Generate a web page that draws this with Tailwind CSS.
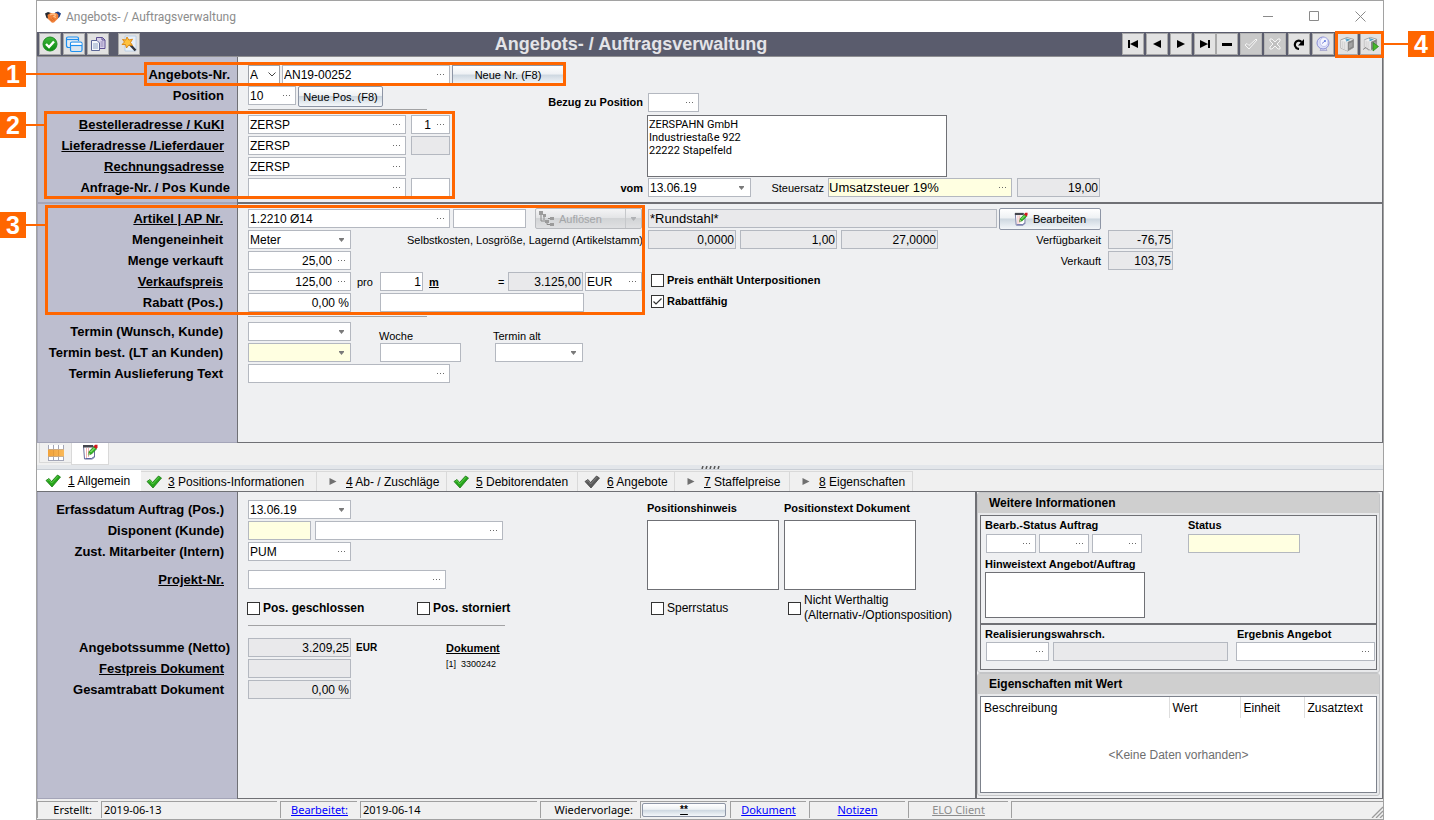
<!DOCTYPE html>
<html lang="de">
<head>
<meta charset="utf-8">
<title>Angebots- / Auftragsverwaltung</title>
<script src="https://cdn.jsdelivr.net/npm/@tailwindcss/browser@4"></script>
</head>
<body class="relative min-h-screen bg-white font-['Liberation_Sans',Arial,sans-serif] text-[12px] leading-4 text-black">

<svg class="absolute h-0 w-0" aria-hidden="true">
  <defs>
    <linearGradient id="gGreen" x1="0" y1="0" x2="0" y2="1"><stop offset="0" stop-color="#3fb83a"/><stop offset="1" stop-color="#0a8a12"/></linearGradient>
    <linearGradient id="gOrange" x1="0" y1="0" x2="1" y2="0"><stop offset="0" stop-color="#f2a33a"/><stop offset="1" stop-color="#f9b858"/></linearGradient>
  </defs>
  <symbol id="dots" viewBox="0 0 7 3"><path d="M0 1h1v1H0zM3 1h1v1H3zM6 1h1v1H6z" fill="#6a6a6a"/></symbol>
  <symbol id="caret" viewBox="0 0 7 4"><path d="M1 0h5v1L3.500 4 1 1z" fill="#7a7a7a"/></symbol>
  <symbol id="caretlight" viewBox="0 0 7 4"><path d="M1 0h5v1L3.500 4 1 1z" fill="#b0b2b5"/></symbol>
  <symbol id="tick" viewBox="0 0 16 14"><path d="M1 6.500 4 4.500 6.500 7.500 12.500 1l3 2L7 13z" fill="#27a51c" stroke="#1b7a14" stroke-width="0.800"/><path d="M2.500 6.500 4 5.500 6.600 9 13 2.200" fill="none" stroke="#5fd04c" stroke-width="1"/></symbol>
  <symbol id="tickgray" viewBox="0 0 16 14"><path d="M1 6.500 4 4.500 6.500 7.500 12.500 1l3 2L7 13z" fill="#5a5a5a" stroke="#444" stroke-width="0.800"/><path d="M2.500 6.500 4 5.500 6.600 9 13 2.200" fill="none" stroke="#808080" stroke-width="1"/></symbol>
  <symbol id="play" viewBox="0 0 8 8"><path d="M0 0l8 4-8 4z" fill="#6f6f6f"/></symbol>
  <symbol id="edit" viewBox="0 0 16 16"><path d="M1.500 2h10l1 1v10l-2 2h-8z" fill="#fff" stroke="#6a6f9c"/><path d="M1 1h10v2.500H1z" fill="#44454d"/><path d="M4.500 4v10M6.500 4v9" stroke="#f0a8a8" stroke-width="0.900"/><path d="M3.500 14.500h6l3-2" fill="none" stroke="#5a62a0"/><path d="M6.300 11l.9-3.500L12 2.500 14.500 5 9.500 10z" fill="#35b828" stroke="#1b7a14" stroke-width="0.700"/><path d="M8.500 8l4-4" stroke="#a8f096"/><path d="M11.500 2.500L13 .8h2.500v2.700L14.300 5z" fill="#d3181c"/><path d="M6.300 11l.6-2 1.400 1.300z" fill="#f4e2b8"/></symbol>
  <symbol id="cube" viewBox="0 0 16 16"><path d="M1.500 4L8 1.500l6.500 1.800v8.200L8.500 15l-7-3.200z" fill="#f3f3f3" stroke="#8f8f8f" stroke-width="0.800"/><path d="M8.500 6l6-2.500v8L8.500 15z" fill="#858585"/><path d="M10 7.500l3.500-1.500v4.500L10 12.500z" fill="#a2a2a2"/><path d="M1.500 4v7.800l7 3.200V6z" fill="#e4e4e4"/><path d="M3.500 5.500v6.500M5.500 6v7" stroke="#d0d0d0" stroke-width="0.700"/><path d="M6.500 2.800l3.500 1-3 1.200" fill="none" stroke="#4f9fc4" stroke-width="1.200"/></symbol>
</svg>

<div class="mr-[50px] ml-9 flex min-h-screen flex-col border border-[#a2a2a2] bg-[#f0f0f0]">

  <!-- Title bar -->
  <header class="flex h-[31px] items-center bg-white pl-2">
    <svg class="h-4 w-4" viewBox="0 0 16 16"><path d="M0 4.500L3 3l3 1-2 6-2.500-1z" fill="#25282f"/><path d="M16 4.500L13 2.500l-3 1 2 6.500 2.500-2z" fill="#1b3f86"/><path d="M2.500 6l3-2 3 .5 3-.5 2 2-.5 3.500L9 13.500l-2 .3L3 10z" fill="#f08038"/><path d="M5 6l3-1 2.500 1L9 7.500l2 1" fill="none" stroke="#ffbf88" stroke-width="1.300"/><path d="M5 9.500l2.500 2.500M7.200 9l2.500 2.200" stroke="#c25a1e" stroke-width="0.700"/></svg>
    <span class="ml-[5px] flex-1 font-[Roboto,sans-serif] text-[12px] text-[#8c8c8c]">Angebots- / Auftragsverwaltung</span>
    <button type="button" aria-label="Minimieren" class="flex h-7 w-[46px] items-center justify-center"><svg class="h-[11px] w-[11px]" viewBox="0 0 11 11"><path d="M0 5.500h10" stroke="#8a8a8a"/></svg></button>
    <button type="button" aria-label="Maximieren" class="flex h-7 w-[46px] items-center justify-center"><svg class="h-[11px] w-[11px]" viewBox="0 0 11 11"><path d="M.5.5h9v9H.5z" fill="none" stroke="#8a8a8a"/></svg></button>
    <button type="button" aria-label="Schließen" class="flex h-7 w-[46px] items-center justify-center"><svg class="h-[11px] w-[11px]" viewBox="0 0 11 11"><path d="M.5.5l10 10M10.500.5l-10 10" stroke="#8a8a8a"/></svg></button>
  </header>

  <!-- Toolbar -->
  <div class="flex h-6 items-center bg-[#5a5c6d] pr-px pl-[2px]">
    <div class="flex gap-[2px]">
      <button type="button" aria-label="Übernehmen" class="flex h-[22px] w-[22px] items-center justify-center border border-[#a9a9a9] bg-[#e2e2e2]"><svg class="h-4 w-4" viewBox="0 0 16 16"><circle cx="8" cy="8" r="7" fill="url(#gGreen)" stroke="#1f8a24"/><path d="M4 8l3 3 5-5.500" fill="none" stroke="#fff" stroke-width="2.400"/></svg></button>
      <button type="button" aria-label="Fenster" class="flex h-[22px] w-[22px] items-center justify-center border border-[#a9a9a9] bg-[#e2e2e2]"><svg class="h-[18px] w-[18px]" viewBox="0 0 18 18"><path d="M5 12.500H3.500q-2 0-2-2v-7q0-1.500 1.500-1.500h9q1.500 0 1.500 1.500V6" fill="#e6ecf2" stroke="#1e90f0" stroke-width="1.200"/><path d="M1.500 4.500h12" stroke="#1e90f0" stroke-width="1.200"/><rect x="5.500" y="7" width="11.500" height="9.500" rx="1.500" fill="#dbe6f0" stroke="#1e90f0" stroke-width="1.200"/><path d="M6 8h10.500v2H6z" fill="#fff"/><path d="M5.500 10.500H17" stroke="#1e90f0" stroke-width="1.200"/></svg></button>
      <button type="button" aria-label="Kopieren" class="flex h-[22px] w-[22px] items-center justify-center border border-[#a9a9a9] bg-[#e2e2e2]"><svg class="h-4 w-4" viewBox="0 0 16 16"><path d="M6.500 1.500h6l2.500 2.500v8.500H6.500z" fill="#d9d2ea" stroke="#5d4f93"/><path d="M12 1.500V4h3" fill="none" stroke="#5d4f93"/><path d="M10.500 6h3M10.500 8h3M10.500 10h3" stroke="#8f83b4"/><path d="M1.500 4.500h5.500l2.500 2.500v7.500h-8z" fill="#f4f7fb" stroke="#5c6797"/><path d="M3 8h5M3 10h5M3 12h5" stroke="#8fa3c4"/></svg></button>
      <button type="button" aria-label="Assistent" class="ml-[7px] flex h-[22px] w-[22px] items-center justify-center border border-[#a9a9a9] bg-[#e2e2e2]"><svg class="h-[18px] w-[18px]" viewBox="0 0 18 18"><path d="M5 1h11v15H5z" fill="#e9f0f8" stroke="#b4cbe6" stroke-width="0.800"/><path d="M10 9.500l5.500 6" stroke="#34363e" stroke-width="2.400"/><path d="M7 2l1.800 3 3.700-.8-2 3.300 2 3-3.700-.5L6.500 13l-1-3.500L2 9.500 4.500 7 2.500 4.500l3.200.6z" fill="#ffc23e" stroke="#d9820d" stroke-width="0.900"/></svg></button>
    </div>
    <h1 class="flex-1 text-center text-[18px] font-bold text-[#e4e4e8]">Angebots- / Auftragsverwaltung</h1>
    <div class="flex gap-[2px]">
      <button type="button" aria-label="Erster" class="flex h-[22px] w-[22px] items-center justify-center border border-[#a9a9a9] bg-[#e2e2e2]"><svg class="h-2 w-[10px]" viewBox="0 0 10 8"><path d="M0 0h2v8H0zM10 0v8L2 4z"/></svg></button>
      <button type="button" aria-label="Zurück" class="flex h-[22px] w-[22px] items-center justify-center border border-[#a9a9a9] bg-[#e2e2e2]"><svg class="h-2 w-2" viewBox="0 0 8 8"><path d="M8 0v8L0 4z"/></svg></button>
      <button type="button" aria-label="Weiter" class="flex h-[22px] w-[22px] items-center justify-center border border-[#a9a9a9] bg-[#e2e2e2]"><svg class="h-2 w-2" viewBox="0 0 8 8"><path d="M0 0v8l8-4z"/></svg></button>
      <button type="button" aria-label="Letzter" class="flex h-[22px] w-[22px] items-center justify-center border border-[#a9a9a9] bg-[#e2e2e2]"><svg class="h-2 w-[10px]" viewBox="0 0 10 8"><path d="M8 0h2v8H8zM0 0v8l8-4z"/></svg></button>
    </div>
    <div class="mr-[2px] flex gap-[2px]">
      <button type="button" aria-label="Löschen" class="flex h-[22px] w-[22px] items-center justify-center border border-[#a9a9a9] bg-[#e2e2e2]"><svg class="h-[3px] w-[10px]" viewBox="0 0 10 3"><path d="M0 0h10v3H0z"/></svg></button>
      <button type="button" disabled aria-label="Speichern" class="flex h-[22px] w-[22px] items-center justify-center border border-[#b4b4b4] bg-[#c9c9c9]"><svg class="h-[14px] w-[14px]" viewBox="0 0 14 14"><path d="M1 8l2-1.500 2 2L12 2l1 1-8 9z" fill="#c4c4c4" stroke="#f6f6f6"/></svg></button>
      <button type="button" disabled aria-label="Abbrechen" class="flex h-[22px] w-[22px] items-center justify-center border border-[#b4b4b4] bg-[#c9c9c9]"><svg class="h-[14px] w-[14px]" viewBox="0 0 14 14"><path d="M2 2h2l3 3 3-3h2v2L9 7l3 3v2h-2L7 9l-3 3H2v-2l3-3-3-3z" fill="#c0c0c0" stroke="#f6f6f6"/></svg></button>
      <button type="button" aria-label="Aktualisieren" class="flex h-[22px] w-[22px] items-center justify-center border border-[#a9a9a9] bg-[#e2e2e2]"><svg class="h-3 w-3" viewBox="0 0 12 12"><path d="M6 11C1.500 10.500 1 6 3 3.800 4.500 2.200 7 2.200 8.500 4" fill="none" stroke="#000" stroke-width="2.200"/><path d="M11 1v6.500H5z"/></svg></button>
      <button type="button" aria-label="Suchen" class="flex h-[22px] w-[22px] items-center justify-center border border-[#a9a9a9] bg-[#e2e2e2]"><svg class="h-4 w-4" viewBox="0 0 16 16"><path d="M5 14.500h7l-1.500-3h-4z" fill="#d6d6ee" stroke="#9a9ac8" stroke-width="0.700"/><circle cx="8" cy="7" r="6" fill="#dcdff8" stroke="#8b8fd6"/><ellipse cx="9" cy="6" rx="4" ry="4.500" fill="#f5f6ff" stroke="#b5b9ea" stroke-width="0.800"/><path d="M7 7.500l3-2.500" stroke="#7d86d8"/><circle cx="10" cy="5" r="1" fill="#5e79e0"/></svg></button>
    </div>
    <div class="flex gap-[2px]">
      <button type="button" aria-label="Artikel" class="flex h-[22px] w-[22px] items-center justify-center border border-[#a9a9a9] bg-[#e2e2e2]"><svg class="h-4 w-4"><use href="#cube"/></svg></button>
      <button type="button" aria-label="Artikel starten" class="flex h-[22px] w-[22px] items-center justify-center border border-[#a9a9a9] bg-[#e2e2e2]"><svg class="h-4 w-4" viewBox="0 0 16 16"><use href="#cube" width="15" height="15"/><path d="M10 6.500V15l5.500-4.500z" fill="#45b828" stroke="#23801a" stroke-width="0.700"/><path d="M0 13.500l3-2 3 3" fill="none" stroke="#777" stroke-width="0.800"/></svg></button>
    </div>
  </div>

  <main class="flex flex-1 flex-col border-t border-[#8f8f92]">

    <!-- Quotation head -->
    <section class="flex">
      <div class="w-[200px] border-b-2 border-l border-[#a4a5b8] bg-[#bdbecf] pt-2 pr-[13px] text-right text-[13px] font-bold leading-5">
        <div class="-mr-[6px] h-[21px]"><label for="angnr">Angebots-Nr.</label></div>
        <div class="mb-2 h-[21px]"><label for="pos">Position</label></div>
        <div class="h-[21px]"><a href="#besteller" class="underline">Bestelleradresse / KuKI</a></div>
        <div class="h-[21px]"><a href="#liefer" class="underline">Lieferadresse /Lieferdauer</a></div>
        <div class="h-[21px]"><a href="#rechnung" class="underline">Rechnungsadresse</a></div>
        <div class="-mr-[6px] h-[21px]"><label for="anfrage">Anfrage-Nr. / Pos Kunde</label></div>
      </div>
      <div class="flex flex-1 border-r border-b-2 border-l border-[#6f7075] bg-[#eff0f2] pt-2 pb-[3px] pl-[10px]">
        <div class="w-[290px]">
          <div class="flex h-[21px] w-[320px] items-start">
            <div class="flex h-[19px] w-[32px] items-center border border-[#9da1a8] bg-white pr-[3px]"><select aria-label="Belegart" class="w-0 flex-1 appearance-none pl-px text-[12px] outline-none"><option>A</option></select><svg class="pointer-events-none h-[5px] w-2" viewBox="0 0 8 5"><path d="M.5.5L4 4 7.500.5" fill="none" stroke="#444"/></svg></div>
            <div class="ml-[2px] flex h-[19px] w-[168px] items-center border border-[#b4b8c0] bg-white pr-[5px]"><input id="angnr" value="AN19-00252" class="w-0 flex-1 pl-px text-[12px] outline-none"><button type="button" aria-label="Auswahl" class="flex"><svg class="h-[3px] w-[7px]"><use href="#dots"/></svg></button></div>
            <button type="button" class="ml-[2px] h-[20px] w-[112px] border border-[#8d95a5] bg-[linear-gradient(#fff,#eef1f4_45%,#cdd7e0_50%,#f4f7fa)] text-[11px] leading-[16px]">Neue Nr. (F8)</button>
          </div>
          <div class="flex h-[21px] items-start">
            <div class="flex h-[19px] w-[48px] items-center border border-[#b4b8c0] bg-white pr-[5px]"><input id="pos" value="10" class="w-0 flex-1 pl-px text-[12px] outline-none"><button type="button" aria-label="Auswahl" class="flex"><svg class="h-[3px] w-[7px]"><use href="#dots"/></svg></button></div>
            <button type="button" class="ml-[2px] h-[21px] w-[85px] rounded-[2px] border border-[#8d95a5] bg-[linear-gradient(#fff,#eef1f4_45%,#cdd7e0_50%,#f4f7fa)] text-[11px]">Neue Pos. (F8)</button>
          </div>
          <div class="h-2 w-[179px] pt-[2px]"><hr class="border-t border-[#a2a2a4]"></div>
          <div class="flex h-[21px] items-start gap-[5px]">
            <div class="flex h-[19px] w-[158px] items-center border border-[#b4b8c0] bg-white pr-[5px]"><input id="besteller" aria-label="Bestelleradresse" value="ZERSP" class="w-0 flex-1 pl-px text-[12px] outline-none"><button type="button" aria-label="Auswahl" class="flex"><svg class="h-[3px] w-[7px]"><use href="#dots"/></svg></button></div>
            <div class="flex h-[19px] w-[39px] items-center border border-[#b4b8c0] bg-white pr-[5px]"><input aria-label="KuKI" value="1" class="w-0 flex-1 pr-[6px] text-right text-[12px] outline-none"><button type="button" aria-label="Auswahl" class="flex"><svg class="h-[3px] w-[7px]"><use href="#dots"/></svg></button></div>
          </div>
          <div class="flex h-[21px] items-start gap-[5px]">
            <div class="flex h-[19px] w-[158px] items-center border border-[#b4b8c0] bg-white pr-[5px]"><input id="liefer" aria-label="Lieferadresse" value="ZERSP" class="w-0 flex-1 pl-px text-[12px] outline-none"><button type="button" aria-label="Auswahl" class="flex"><svg class="h-[3px] w-[7px]"><use href="#dots"/></svg></button></div>
            <input aria-label="Lieferdauer" readonly class="h-[19px] w-[39px] border border-[#b4b8c0] bg-[#e9e9eb] outline-none">
          </div>
          <div class="flex h-[21px] items-start">
            <div class="flex h-[19px] w-[158px] items-center border border-[#b4b8c0] bg-white pr-[5px]"><input id="rechnung" aria-label="Rechnungsadresse" value="ZERSP" class="w-0 flex-1 pl-px text-[12px] outline-none"><button type="button" aria-label="Auswahl" class="flex"><svg class="h-[3px] w-[7px]"><use href="#dots"/></svg></button></div>
          </div>
          <div class="flex h-[21px] items-start gap-[5px]">
            <div class="flex h-[19px] w-[158px] items-center border border-[#b4b8c0] bg-white pr-[5px]"><input id="anfrage" class="w-0 flex-1 outline-none"><button type="button" aria-label="Auswahl" class="flex"><svg class="h-[3px] w-[7px]"><use href="#dots"/></svg></button></div>
            <input aria-label="Pos Kunde" class="h-[19px] w-[39px] border border-[#b4b8c0] bg-white outline-none">
          </div>
        </div>
        <div class="flex-1 pt-7">
          <div class="flex h-[22px] items-start">
            <label for="bezug" class="w-[105px] pt-px text-right text-[11px] font-bold">Bezug zu Position</label>
            <div class="ml-[5px] flex h-[19px] w-[51px] items-center border border-[#b4b8c0] bg-white pr-[5px]"><input id="bezug" class="w-0 flex-1 outline-none"><button type="button" aria-label="Auswahl" class="flex"><svg class="h-[3px] w-[7px]"><use href="#dots"/></svg></button></div>
          </div>
          <textarea aria-label="Anschrift" class="ml-[109px] block h-[62px] w-[300px] resize-none border border-[#6f7075] bg-white px-px py-[2px] font-[Roboto,sans-serif] text-[11px] leading-[13px] outline-none">ZERSPAHN GmbH
Industriestaße 922
22222 Stapelfeld</textarea>
          <div class="mt-px flex h-[19px] items-center">
            <label for="vom" class="w-[105px] text-right text-[11px] font-bold">vom</label>
            <div class="ml-[5px] flex h-[19px] w-[103px] items-center border border-[#b4b8c0] bg-white pr-[5px]"><select id="vom" class="w-0 flex-1 appearance-none pl-px text-[12px] outline-none"><option>13.06.19</option></select><svg class="pointer-events-none h-1 w-[7px]"><use href="#caret"/></svg></div>
            <label for="steuer" class="w-[73px] text-right text-[11px]">Steuersatz</label>
            <div class="ml-[4px] flex h-[19px] w-[184px] items-center border border-[#b4b8c0] bg-[#ffffe1] pr-[5px]"><input id="steuer" value="Umsatzsteuer 19%" class="w-0 flex-1 text-[13px] outline-none"><button type="button" aria-label="Auswahl" class="flex"><svg class="h-[3px] w-[7px]"><use href="#dots"/></svg></button></div>
            <input aria-label="Steuersatz in Prozent" readonly value="19,00" class="ml-[5px] h-[19px] w-[83px] border border-[#b4b8c0] bg-[#e9e9eb] pr-px text-right text-[12px] outline-none">
          </div>
        </div>
      </div>
    </section>

    <!-- Article and price -->
    <section class="flex">
      <div class="w-[200px] border-b border-l border-[#a4a5b8] bg-[#bdbecf] pt-[5px] pr-[14px] text-right text-[13px] font-bold leading-5">
        <div class="h-[21px]"><a href="#artikel" class="underline">Artikel | AP Nr.</a></div>
        <div class="h-[21px]"><label for="einheit">Mengeneinheit</label></div>
        <div class="h-[21px]"><label for="menge">Menge verkauft</label></div>
        <div class="h-[21px]"><a href="#preis" class="underline">Verkaufspreis</a></div>
        <div class="mb-2 h-[21px]"><label for="rabatt">Rabatt (Pos.)</label></div>
        <div class="h-[21px]"><label for="wunsch">Termin (Wunsch, Kunde)</label></div>
        <div class="h-[21px] whitespace-nowrap"><label for="best">Termin best. (LT an Kunden)</label></div>
        <div class="h-[21px]"><label for="auslief">Termin Auslieferung Text</label></div>
      </div>
      <div class="flex-1 border-r border-b border-l border-[#6f7075] bg-[#eff0f2] pt-[5px] pb-[57px] pl-[10px]">
        <div class="flex h-[21px] items-start">
          <div class="flex w-[400px] items-start">
            <div class="flex h-[19px] w-[202px] items-center border border-[#b4b8c0] bg-white pr-[5px]"><input id="artikel" aria-label="Artikel" value="1.2210 Ø14" class="w-0 flex-1 pl-px text-[12px] outline-none"><button type="button" aria-label="Auswahl" class="flex"><svg class="h-[3px] w-[7px]"><use href="#dots"/></svg></button></div>
            <input aria-label="AP Nr." class="ml-[3px] h-[19px] w-[73px] border border-[#b4b8c0] bg-white outline-none">
            <div class="-mt-px ml-[9px] flex h-[21px] w-[107px] overflow-hidden rounded-[2px] border border-[#b9bbbf] bg-[linear-gradient(#f4f4f5,#e4e5e7_45%,#d2d4d6_50%,#dfe0e2)]">
              <button type="button" disabled class="flex flex-1 items-center gap-[5px] pl-[3px] text-[11px] text-[#a3a5a8]"><svg class="h-[15px] w-[15px]" viewBox="0 0 15 15"><path d="M0 0h4v4H0zM4 3h3v3H4zM6 9h4v3H6zM11 6h4v3h-4zM11 12h4v3h-4z" fill="#9b9b9b"/><path d="M2 4v6h4M5 6v3M9 7.500h2M8 12v1.500h3" fill="none" stroke="#8a8a8a"/></svg>Auflösen</button>
              <button type="button" disabled aria-label="Weitere" class="flex w-4 items-center justify-center border-l border-[#c6c8cb]"><svg class="h-1 w-[7px]"><use href="#caretlight"/></svg></button>
            </div>
          </div>
          <input aria-label="Bezeichnung" readonly value="*Rundstahl*" class="h-[19px] w-[349px] border border-[#b4b8c0] bg-[#e9e9eb] pl-px text-[13px] outline-none">
          <button type="button" class="-mt-px ml-[2px] flex h-[22px] w-[102px] items-center justify-center gap-[5px] rounded-[2px] border border-[#8d95a5] bg-[linear-gradient(#fff,#eef1f4_45%,#cdd7e0_50%,#f4f7fa)] text-[11px]"><svg class="h-[14px] w-[14px]"><use href="#edit"/></svg>Bearbeiten</button>
        </div>
        <div class="flex h-[21px] items-start">
          <div class="flex w-[400px] items-start justify-between pr-[5px]">
            <div class="flex h-[19px] w-[103px] items-center border border-[#b4b8c0] bg-white pr-[5px]"><select id="einheit" class="w-0 flex-1 appearance-none pl-px text-[12px] outline-none"><option>Meter</option></select><svg class="pointer-events-none h-1 w-[7px]"><use href="#caret"/></svg></div>
            <span class="pt-[2px] text-[11px]">Selbstkosten, Losgröße, Lagernd (Artikelstamm)</span>
          </div>
          <input aria-label="Selbstkosten" readonly value="0,0000" class="h-[19px] w-[88px] border border-[#b4b8c0] bg-[#e9e9eb] pr-px text-right text-[12px] outline-none">
          <input aria-label="Losgröße" readonly value="1,00" class="ml-[4px] h-[19px] w-[97px] border border-[#b4b8c0] bg-[#e9e9eb] pr-px text-right text-[12px] outline-none">
          <input aria-label="Lagernd" readonly value="27,0000" class="ml-[4px] h-[19px] w-[97px] border border-[#b4b8c0] bg-[#e9e9eb] pr-px text-right text-[12px] outline-none">
          <label for="verf" class="w-[163px] pt-[2px] text-right text-[11px]">Verfügbarkeit</label>
          <input id="verf" readonly value="-76,75" class="ml-[7px] h-[19px] w-[65px] border border-[#b4b8c0] bg-[#e9e9eb] pr-px text-right text-[12px] outline-none">
        </div>
        <div class="flex h-[21px] items-start">
          <div class="flex h-[19px] w-[103px] items-center border border-[#b4b8c0] bg-white pr-[5px]"><input id="menge" value="25,00" class="w-0 flex-1 pr-[6px] text-right text-[12px] outline-none"><button type="button" aria-label="Auswahl" class="flex"><svg class="h-[3px] w-[7px]"><use href="#dots"/></svg></button></div>
          <label for="verk" class="w-[750px] pt-[2px] text-right text-[11px]">Verkauft</label>
          <input id="verk" readonly value="103,75" class="ml-[7px] h-[19px] w-[65px] border border-[#b4b8c0] bg-[#e9e9eb] pr-px text-right text-[12px] outline-none">
        </div>
        <div class="flex h-[21px] items-start">
          <div class="flex w-[403px] items-start">
            <div class="flex h-[19px] w-[103px] items-center border border-[#b4b8c0] bg-white pr-[5px]"><input id="preis" aria-label="Verkaufspreis" value="125,00" class="w-0 flex-1 pr-[6px] text-right text-[12px] outline-none"><button type="button" aria-label="Auswahl" class="flex"><svg class="h-[3px] w-[7px]"><use href="#dots"/></svg></button></div>
            <label for="pro" class="w-[29px] pt-[2px] pl-[6px] text-[11px]">pro</label>
            <input id="pro" value="1" class="h-[19px] w-[43px] border border-[#b4b8c0] bg-white pr-px text-right text-[12px] outline-none">
            <a href="#einheit" class="w-[69px] pt-[2px] pl-[6px] text-[11px] font-bold underline">m</a>
            <span class="w-[16px] pt-[2px] pl-[6px] text-[11px]">=</span>
            <input aria-label="Betrag" readonly value="3.125,00" class="h-[19px] w-[75px] border border-[#b4b8c0] bg-[#e9e9eb] pr-px text-right text-[12px] outline-none">
            <div class="ml-[2px] flex h-[19px] w-[57px] items-center border border-[#b4b8c0] bg-white pr-[5px]"><input aria-label="Währung" value="EUR" class="w-0 flex-1 pl-px text-[12px] outline-none"><button type="button" aria-label="Auswahl" class="flex"><svg class="h-[3px] w-[7px]"><use href="#dots"/></svg></button></div>
          </div>
          <label class="flex items-center gap-[3px] text-[11px] font-bold"><input type="checkbox" class="h-[13px] w-[13px] appearance-none border border-[#333] bg-white">Preis enthält Unterpositionen</label>
        </div>
        <div class="flex h-[21px] items-start">
          <div class="flex w-[403px] items-start">
            <input id="rabatt" value="0,00 %" class="h-[19px] w-[103px] border border-[#b4b8c0] bg-white pr-px text-right text-[12px] outline-none">
            <input aria-label="Rabatt Text" class="ml-[29px] h-[19px] w-[204px] border border-[#b4b8c0] bg-white outline-none">
          </div>
          <label class="flex items-center gap-[3px] text-[11px] font-bold"><span class="relative flex"><input type="checkbox" checked class="h-[13px] w-[13px] appearance-none border border-[#333] bg-white"><svg class="pointer-events-none absolute top-[3px] left-[2px] h-[7px] w-[9px]" viewBox="0 0 9 7"><path d="M.5 3.500L3 6 8.500.5" fill="none" stroke="#333" stroke-width="1.200"/></svg></span>Rabattfähig</label>
        </div>
        <div class="h-2 w-[179px] pt-[2px]"><hr class="border-t border-[#a2a2a4]"></div>
        <div class="flex h-[21px] items-start">
          <div class="flex h-[19px] w-[103px] items-center border border-[#b4b8c0] bg-white pr-[5px]"><select id="wunsch" class="w-0 flex-1 appearance-none outline-none"><option></option></select><svg class="pointer-events-none h-1 w-[7px]"><use href="#caret"/></svg></div>
          <label for="woche" class="ml-[28px] w-[114px] self-end text-[11px] leading-[14px]">Woche</label>
          <label for="alt" class="self-end text-[11px] leading-[14px]">Termin alt</label>
        </div>
        <div class="flex h-[21px] items-start">
          <div class="flex h-[19px] w-[103px] items-center border border-[#b4b8c0] bg-[#ffffe1] pr-[5px]"><select id="best" class="w-0 flex-1 appearance-none outline-none"><option></option></select><svg class="pointer-events-none h-1 w-[7px]"><use href="#caret"/></svg></div>
          <input id="woche" class="ml-[29px] h-[19px] w-[81px] border border-[#b4b8c0] bg-white outline-none">
          <div class="ml-[34px] flex h-[19px] w-[88px] items-center border border-[#b4b8c0] bg-white pr-[5px]"><select id="alt" class="w-0 flex-1 appearance-none outline-none"><option></option></select><svg class="pointer-events-none h-1 w-[7px]"><use href="#caret"/></svg></div>
        </div>
        <div class="flex h-[21px] items-start">
          <div class="flex h-[19px] w-[202px] items-center border border-[#b4b8c0] bg-white pr-[5px]"><input id="auslief" class="w-0 flex-1 outline-none"><button type="button" aria-label="Auswahl" class="flex"><svg class="h-[3px] w-[7px]"><use href="#dots"/></svg></button></div>
        </div>
      </div>
    </section>

    <!-- View switch and splitter -->
    <div class="flex h-[22px] items-start pl-[2px]">
      <button type="button" aria-label="Tabelle" class="flex h-5 w-[32px] items-center justify-center border-b border-l border-[#d9d9d9]"><svg class="h-4 w-4" viewBox="0 0 16 16"><path d="M0 0h16v16H0z" fill="#a3a6b8"/><path d="M1 0h4v4H1zM6 0h4v4H6zM11 0h4v4h-4zM1 12h4v3H1zM6 12h4v3H6zM11 12h4v3h-4z" fill="#fff"/><path d="M0 4.500h16v7H0z" fill="url(#gOrange)"/><path d="M5.500 5v6M10.500 5v6" stroke="#e0983a" stroke-width="0.800"/></svg></button>
      <button type="button" aria-label="Formular" class="flex h-[22px] w-[38px] items-start justify-center border border-t-0 border-[#d9d9d9] bg-white pt-px"><svg class="h-4 w-4"><use href="#edit"/></svg></button>
    </div>
    <div class="flex h-[5px] items-end justify-center border-b border-[#c8cdd4] bg-[#e3e6ea]">
      <svg class="h-[3px] w-[19px]" viewBox="0 0 19 3"><path d="M1 3l1-3M5 3l1-3M9 3l1-3M13 3l1-3M17 3l1-3" stroke="#555" stroke-width="1.500"/></svg>
    </div>

    <!-- Detail tabs -->
    <div role="tablist" class="flex h-[22px] items-end border-b border-[#6f7075] text-[12px]">
      <button type="button" role="tab" aria-selected="true" class="flex h-full w-[104px] items-center bg-white pl-[8px]"><svg class="h-[14px] w-4"><use href="#tick"/></svg><span class="ml-[7px]"><u>1</u> Allgemein</span></button>
      <button type="button" role="tab" aria-selected="false" class="flex h-[20px] w-[176px] items-center border-t border-r border-[#d9d9d9] pl-[5px]"><svg class="h-[14px] w-4"><use href="#tick"/></svg><span class="ml-[6px]"><u>3</u> Positions-Informationen</span></button>
      <button type="button" role="tab" aria-selected="false" class="flex h-[20px] w-[130px] items-center border-t border-r border-[#d9d9d9] pl-3"><svg class="h-[7px] w-2"><use href="#play"/></svg><span class="ml-[9px]"><u>4</u> Ab- / Zuschläge</span></button>
      <button type="button" role="tab" aria-selected="false" class="flex h-[20px] w-[131px] items-center border-t border-r border-[#d9d9d9] pl-[6px]"><svg class="h-[14px] w-4"><use href="#tick"/></svg><span class="ml-[7px]"><u>5</u> Debitorendaten</span></button>
      <button type="button" role="tab" aria-selected="false" class="flex h-[20px] w-[97px] items-center border-t border-r border-[#d9d9d9] pl-[6px]"><svg class="h-[14px] w-4"><use href="#tickgray"/></svg><span class="ml-[7px]"><u>6</u> Angebote</span></button>
      <button type="button" role="tab" aria-selected="false" class="flex h-[20px] w-[115px] items-center border-t border-r border-[#d9d9d9] pl-3"><svg class="h-[7px] w-2"><use href="#play"/></svg><span class="ml-[9px]"><u>7</u> Staffelpreise</span></button>
      <button type="button" role="tab" aria-selected="false" class="flex h-[20px] w-[123px] items-center border-t border-r border-[#d9d9d9] pl-3"><svg class="h-[7px] w-2"><use href="#play"/></svg><span class="ml-[9px]"><u>8</u> Eigenschaften</span></button>
    </div>

    <!-- General tab -->
    <section class="flex flex-1">
      <div class="w-[200px] border-b border-l border-[#a4a5b8] bg-[#bdbecf] pt-2 pr-[13px] text-right text-[13px] font-bold leading-5">
        <div class="h-[21px]"><label for="erf">Erfassdatum Auftrag (Pos.)</label></div>
        <div class="h-[21px]"><label for="disp">Disponent (Kunde)</label></div>
        <div class="mb-[7px] h-[21px]"><label for="zust">Zust. Mitarbeiter (Intern)</label></div>
        <div class="mb-[47px] h-[21px]"><a href="#projekt" class="underline">Projekt-Nr.</a></div>
        <div class="-mr-[6px] h-[21px]"><label for="summe">Angebotssumme (Netto)</label></div>
        <div class="h-[21px]"><a href="#fest" class="underline">Festpreis Dokument</a></div>
        <div class="h-[21px]"><label for="gesamt">Gesamtrabatt Dokument</label></div>
      </div>
      <div class="flex flex-1 border-b border-l border-[#6f7075] bg-[#eff0f2] pt-2 pl-[10px]">
        <div class="w-[399px]">
          <div class="h-[21px]"><div class="flex h-[19px] w-[103px] items-center border border-[#b4b8c0] bg-white pr-[5px]"><select id="erf" class="w-0 flex-1 appearance-none pl-px text-[12px] outline-none"><option>13.06.19</option></select><svg class="pointer-events-none h-1 w-[7px]"><use href="#caret"/></svg></div></div>
          <div class="flex h-[21px] items-start">
            <input id="disp" class="h-[19px] w-[63px] border border-[#b4b8c0] bg-[#ffffe1] outline-none">
            <div class="ml-[4px] flex h-[19px] w-[188px] items-center border border-[#b4b8c0] bg-white pr-[5px]"><input aria-label="Disponent Name" class="w-0 flex-1 outline-none"><button type="button" aria-label="Auswahl" class="flex"><svg class="h-[3px] w-[7px]"><use href="#dots"/></svg></button></div>
          </div>
          <div class="mb-[7px] h-[21px]"><div class="flex h-[19px] w-[103px] items-center border border-[#b4b8c0] bg-white pr-[5px]"><input id="zust" value="PUM" class="w-0 flex-1 pl-px text-[12px] outline-none"><button type="button" aria-label="Auswahl" class="flex"><svg class="h-[3px] w-[7px]"><use href="#dots"/></svg></button></div></div>
          <div class="h-[21px]"><div class="flex h-[19px] w-[198px] items-center border border-[#b4b8c0] bg-white pr-[5px]"><input id="projekt" aria-label="Projekt-Nr." class="w-0 flex-1 outline-none"><button type="button" aria-label="Auswahl" class="flex"><svg class="h-[3px] w-[7px]"><use href="#dots"/></svg></button></div></div>
          <div class="mt-[9px] -ml-px flex h-4">
            <label class="flex w-[170px] items-center gap-[3px] text-[12px] font-bold"><input type="checkbox" class="h-[13px] w-[13px] appearance-none border border-[#333] bg-white">Pos. geschlossen</label>
            <label class="flex items-center gap-[3px] text-[12px] font-bold"><input type="checkbox" class="h-[13px] w-[13px] appearance-none border border-[#333] bg-white">Pos. storniert</label>
          </div>
          <hr class="mt-[9px] mb-3 w-[257px] border-t border-[#a2a2a4]">
          <div class="flex">
            <div class="w-[198px]">
              <div class="flex h-[21px] items-start gap-[5px]"><input id="summe" readonly value="3.209,25" class="h-[19px] w-[103px] border border-[#b4b8c0] bg-[#e9e9eb] pr-px text-right text-[12px] outline-none"><span class="pt-[2px] text-[10px] font-bold">EUR</span></div>
              <div class="h-[21px]"><input id="fest" aria-label="Festpreis Dokument" readonly class="block h-[19px] w-[103px] border border-[#b4b8c0] bg-[#e9e9eb] outline-none"></div>
              <div class="h-[21px]"><input id="gesamt" readonly value="0,00 %" class="block h-[19px] w-[103px] border border-[#b4b8c0] bg-[#e9e9eb] pr-px text-right text-[12px] outline-none"></div>
            </div>
            <div class="pt-[2px]">
              <a href="#dok" class="text-[11px] font-bold underline">Dokument</a>
              <div id="dok" class="flex gap-[5px] text-[9px]"><span>[1]</span><span>3300242</span></div>
            </div>
          </div>
        </div>
        <div class="w-[137px]">
          <label for="hinweis" class="mb-[4px] block text-[11px] font-bold">Positionshinweis</label>
          <textarea id="hinweis" class="block h-[70px] w-[132px] resize-none border border-[#6f7075] bg-white outline-none"></textarea>
          <label class="mt-[10px] ml-[4px] flex items-center gap-[3px] text-[12px]"><input type="checkbox" class="h-[13px] w-[13px] appearance-none border border-[#333] bg-white">Sperrstatus</label>
        </div>
        <div class="min-w-[180px] flex-1">
          <label for="postext" class="mb-[4px] block text-[11px] font-bold">Positionstext Dokument</label>
          <textarea id="postext" class="block h-[70px] w-[132px] resize-none border border-[#6f7075] bg-white outline-none"></textarea>
          <label class="mt-[3px] ml-[4px] flex items-center gap-[3px] text-[12px] leading-[15px]"><input type="checkbox" class="h-[13px] w-[13px] appearance-none border border-[#333] bg-white"><span>Nicht Werthaltig<br>(Alternativ-/Optionsposition)</span></label>
        </div>
      </div>

      <aside class="flex w-[408px] flex-col border-r border-b border-l-2 border-[#6f7075] bg-[#eff0f2] pr-[2px] pb-[2px]">
        <div class="rounded-[3px] border border-[#c4c5c7] bg-[#e8e9eb] pb-[2px]">
          <h2 class="h-[20px] bg-[#cfcfcf] pl-[11px] text-[12px] font-bold leading-5">Weitere Informationen</h2>
          <div class="mx-[2px] mt-[2px] border border-[#6f7075] bg-[#eff0f2]">
            <div class="h-[109px] border-b-2 border-[#6f7075] px-[4px] pt-px">
              <div class="flex">
                <div class="w-[203px]">
                  <div class="text-[11px] font-bold">Bearb.-Status Auftrag</div>
                  <div class="mt-px ml-px flex gap-[3px]">
                    <div class="flex h-[19px] w-[50px] items-center border border-[#b4b8c0] bg-white pr-[5px]"><input aria-label="Bearb.-Status 1" class="w-0 flex-1 outline-none"><button type="button" aria-label="Auswahl" class="flex"><svg class="h-[3px] w-[7px]"><use href="#dots"/></svg></button></div>
                    <div class="flex h-[19px] w-[50px] items-center border border-[#b4b8c0] bg-white pr-[5px]"><input aria-label="Bearb.-Status 2" class="w-0 flex-1 outline-none"><button type="button" aria-label="Auswahl" class="flex"><svg class="h-[3px] w-[7px]"><use href="#dots"/></svg></button></div>
                    <div class="flex h-[19px] w-[50px] items-center border border-[#b4b8c0] bg-white pr-[5px]"><input aria-label="Bearb.-Status 3" class="w-0 flex-1 outline-none"><button type="button" aria-label="Auswahl" class="flex"><svg class="h-[3px] w-[7px]"><use href="#dots"/></svg></button></div>
                  </div>
                </div>
                <div>
                  <label for="status" class="block text-[11px] font-bold">Status</label>
                  <input id="status" class="mt-px block h-[19px] w-[112px] border border-[#b4b8c0] bg-[#ffffe1] outline-none">
                </div>
              </div>
              <label for="hinw" class="mt-[3px] block text-[11px] font-bold">Hinweistext Angebot/Auftrag</label>
              <textarea id="hinw" class="block h-[46px] w-[160px] resize-none border border-[#6f7075] bg-white outline-none"></textarea>
            </div>
            <div class="flex h-[44px] pt-px pr-px pl-[4px]">
              <div class="flex-1">
                <label for="real" class="block text-[11px] font-bold">Realisierungswahrsch.</label>
                <div class="ml-px flex gap-[4px]">
                  <div class="flex h-[19px] w-[63px] items-center border border-[#b4b8c0] bg-white pr-[5px]"><input id="real" class="w-0 flex-1 outline-none"><button type="button" aria-label="Auswahl" class="flex"><svg class="h-[3px] w-[7px]"><use href="#dots"/></svg></button></div>
                  <input aria-label="Realisierung Text" readonly class="h-[19px] w-[175px] border border-[#b4b8c0] bg-[#e9e9eb] outline-none">
                </div>
              </div>
              <div class="w-[139px]">
                <label for="erg" class="block pl-px text-[11px] font-bold">Ergebnis Angebot</label>
                <div class="flex h-[19px] items-center border border-[#b4b8c0] bg-white pr-[5px]"><input id="erg" class="w-0 flex-1 outline-none"><button type="button" aria-label="Auswahl" class="flex"><svg class="h-[3px] w-[7px]"><use href="#dots"/></svg></button></div>
              </div>
            </div>
          </div>
        </div>
        <div class="flex flex-1 flex-col rounded-[3px] border border-[#c4c5c7] bg-[#e8e9eb] pb-[2px]">
          <h2 class="h-[20px] bg-[#cfcfcf] pl-[11px] text-[12px] font-bold leading-5">Eigenschaften mit Wert</h2>
          <div class="mx-[2px] mt-[2px] flex flex-1 flex-col border border-[#7d828c] bg-white">
            <table class="w-full table-fixed text-left text-[12px]">
              <thead><tr class="h-[21px]">
                <th class="w-[188px] border-r border-[#dedede] pl-[3px] font-normal">Beschreibung</th>
                <th class="w-[71px] border-r border-[#dedede] pl-[3px] font-normal">Wert</th>
                <th class="w-[64px] border-r border-[#dedede] pl-[3px] font-normal">Einheit</th>
                <th class="pl-[3px] font-normal">Zusatztext</th>
              </tr></thead>
              <tbody><tr><td colspan="4" class="pt-[29px] text-center text-[#6e6e6e]">&lt;Keine Daten vorhanden&gt;</td></tr></tbody>
            </table>
          </div>
        </div>
      </aside>
    </section>
  </main>

  <!-- Status bar -->
  <footer class="flex h-[20px] gap-[3px] pt-[2px] pb-px font-['Noto_Sans','Open_Sans',sans-serif] text-[11px] leading-[16px]">
    <div class="w-[61px] border-t border-l border-[#a0a0a0] pr-[6px] text-right">Erstellt:</div>
    <div class="w-[176px] border-t border-l border-[#a0a0a0] pl-[2px]">2019-06-13</div>
    <div class="w-[77px] border-t border-l border-[#a0a0a0] pr-[9px] text-right"><a href="#bearb" class="text-[#0000ff] underline">Bearbeitet:</a></div>
    <div id="bearb" class="w-[177px] border-t border-l border-[#a0a0a0] pl-[2px]">2019-06-14</div>
    <div class="w-[97px] border-t border-l border-[#a0a0a0] pr-[4px] text-right">Wiedervorlage:</div>
    <div class="w-[87px] border-t border-l border-[#a0a0a0] px-px pt-px"><button type="button" class="block h-[14px] w-full rounded-[2px] border border-[#8d95a5] bg-[linear-gradient(#fff,#eef1f4_45%,#cdd7e0_50%,#f4f7fa)] font-['Liberation_Sans',sans-serif] text-[10px] font-bold leading-[12px] underline">**</button></div>
    <div class="w-[76px] border-t border-l border-[#a0a0a0] text-center"><a href="#dok" class="text-[#0000ff] underline">Dokument</a></div>
    <div class="w-[96px] border-t border-l border-[#a0a0a0] text-center"><a href="#notizen" class="text-[#0000ff] underline">Notizen</a></div>
    <div class="w-[100px] border-t border-l border-[#a0a0a0] text-center"><a href="#elo" class="text-[#8c8c8c] underline">ELO Client</a></div>
    <div class="flex flex-1 items-end justify-end border-t border-l border-[#a0a0a0]"><svg class="h-3 w-3" viewBox="0 0 12 12"><path d="M1 12L12 1M5 12l7-7M9 12l3-3" stroke="#9a9a9a" stroke-width="1.300"/></svg></div>
  </footer>
</div>

<!-- Numbered callouts over the form -->
<div class="pointer-events-none text-[25px] leading-[26px] font-bold text-white">
  <div class="absolute top-[61px] left-0 h-[26px] w-[26px] bg-[#ff6600] text-center">1</div>
  <div class="absolute top-[73px] left-[26px] h-[2px] w-[118px] bg-[#ff6600]"></div>
  <div class="absolute top-[62px] left-[144px] h-[24px] w-[422px] border-3 border-[#ff6600]"></div>

  <div class="absolute top-[112px] left-0 h-[26px] w-[26px] bg-[#ff6600] text-center">2</div>
  <div class="absolute top-[124px] left-[26px] h-[2px] w-[18px] bg-[#ff6600]"></div>
  <div class="absolute top-[111px] left-[44px] h-[88px] w-[411px] border-3 border-[#ff6600]"></div>

  <div class="absolute top-[212px] left-0 h-[26px] w-[26px] bg-[#ff6600] text-center">3</div>
  <div class="absolute top-[224px] left-[26px] h-[2px] w-[20px] bg-[#ff6600]"></div>
  <div class="absolute top-[205px] left-[45px] h-[110px] w-[600px] border-3 border-[#ff6600]"></div>

  <div class="absolute top-[31px] right-0 h-[26px] w-[26px] bg-[#ff6600] text-center">4</div>
  <div class="absolute top-[43px] right-[26px] h-[2px] w-[24px] bg-[#ff6600]"></div>
  <div class="absolute top-[31px] right-[50px] h-[27px] w-[49px] border-3 border-[#ff6600]"></div>
</div>
</body>
</html>
